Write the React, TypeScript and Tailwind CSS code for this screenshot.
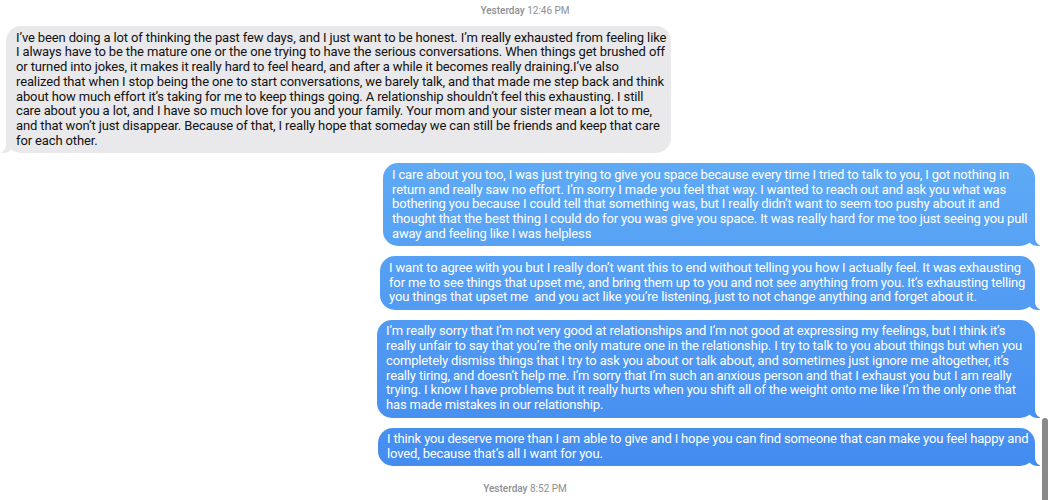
const FONT = { fontFamily: 'Roboto, "Noto Sans", sans-serif' };

const THEIRS = [
  'I’ve been doing a lot of thinking the past few days, and I just want to be honest. I’m really exhausted from feeling like',
  'I always have to be the mature one or the one trying to have the serious conversations. When things get brushed off',
  'or turned into jokes, it makes it really hard to feel heard, and after a while it becomes really draining.I’ve also',
  'realized that when I stop being the one to start conversations, we barely talk, and that made me step back and think',
  'about how much effort it’s taking for me to keep things going. A relationship shouldn’t feel this exhausting. I still',
  'care about you a lot, and I have so much love for you and your family. Your mom and your sister mean a lot to me,',
  'and that won’t just disappear. Because of that, I really hope that someday we can still be friends and keep that care',
  'for each other.',
];

const MINE: { width: string; lines: string[] }[] = [
  {
    width: 'w-[652px]',
    lines: [
      'I care about you too, I was just trying to give you space because every time I tried to talk to you, I got nothing in',
      'return and really saw no effort. I’m sorry I made you feel that way. I wanted to reach out and ask you what was',
      'bothering you because I could tell that something was, but I really didn’t want to seem too pushy about it and',
      'thought that the best thing I could do for you was give you space. It was really hard for me too just seeing you pull',
      'away and feeling like I was helpless',
    ],
  },
  {
    width: 'w-[655px]',
    lines: [
      'I want to agree with you but I really don’t want this to end without telling you how I actually feel. It was exhausting',
      'for me to see things that upset me, and bring them up to you and not see anything from you. It’s exhausting telling',
      'you things that upset me  and you act like you’re listening, just to not change anything and forget about it.',
    ],
  },
  {
    width: 'w-[658px]',
    lines: [
      'I’m really sorry that I’m not very good at relationships and I’m not good at expressing my feelings, but I think it’s',
      'really unfair to say that you’re the only mature one in the relationship. I try to talk to you about things but when you',
      'completely dismiss things that I try to ask you about or talk about, and sometimes just ignore me altogether, it’s',
      'really tiring, and doesn’t help me. I’m sorry that I’m such an anxious person and that I exhaust you but I am really',
      'trying. I know I have problems but it really hurts when you shift all of the weight onto me like I’m the only one that',
      'has made mistakes in our relationship.',
    ],
  },
  {
    width: 'w-[657px]',
    lines: [
      'I think you deserve more than I am able to give and I hope you can find someone that can make you feel happy and',
      'loved, because that’s all I want for you.',
    ],
  },
];

const BLUE = 'bg-fixed bg-linear-to-b from-[#6cbaf9] to-[#4288ef]';

function Stamp({ day, time }: { day: string; time: string }) {
  return (
    <div className="text-center text-[10px] leading-[14px] text-[#8e8e93]">
      <span className="font-medium">{day}</span> {time}
    </div>
  );
}

function Lines({ lines }: { lines: string[] }) {
  return (
    <>
      {lines.map((l, i) => (
        <div key={i} className="whitespace-pre">
          {l}
        </div>
      ))}
    </>
  );
}

export default function App() {
  return (
    <div className="relative h-[500px] w-[1050px] overflow-hidden bg-white" style={FONT}>
      <div className="flex flex-col pt-[4px]">
        <Stamp day="Yesterday" time="12:46 PM" />

        {/* incoming */}
        <div className="relative mt-[8px] ml-[6px] w-[665px] rounded-[15px] bg-[#e9e9eb] px-[10px] py-[4.5px] text-[13px] leading-[14.8px] tracking-[-0.13px] text-[#111]">
          <div className="absolute bottom-0 left-[-5px] h-[14px] w-[14px] rounded-br-[12px] bg-[#e9e9eb]" />
          <div className="absolute bottom-0 left-[-14px] h-[14px] w-[14px] rounded-br-[8px] bg-white" />
          <div className="relative">
            <Lines lines={THEIRS} />
          </div>
        </div>

        {/* outgoing */}
        <div className="mt-[10px] mr-[15px] flex flex-col items-end gap-[10px]">
          {MINE.map((m, i) => (
            <div
              key={i}
              className={`relative ${m.width} rounded-[15px] ${BLUE} px-[9px] py-[4.5px] text-[13px] leading-[14.8px] tracking-[-0.15px] text-white`}
            >
              <div className={`absolute bottom-0 right-[-5px] h-[14px] w-[14px] rounded-bl-[12px] ${BLUE}`} />
              <div className="absolute bottom-0 right-[-14px] h-[14px] w-[14px] rounded-bl-[8px] bg-white" />
              <div className="relative">
                <Lines lines={m.lines} />
              </div>
            </div>
          ))}
        </div>

        <div className="mt-[16px]">
          <Stamp day="Yesterday" time="8:52 PM" />
        </div>
      </div>

      {/* scrollbar thumb */}
      <div className="absolute top-[418px] right-[2px] h-[90px] w-[6px] rounded-full bg-[#8a8a8a]" />
    </div>
  );
}
